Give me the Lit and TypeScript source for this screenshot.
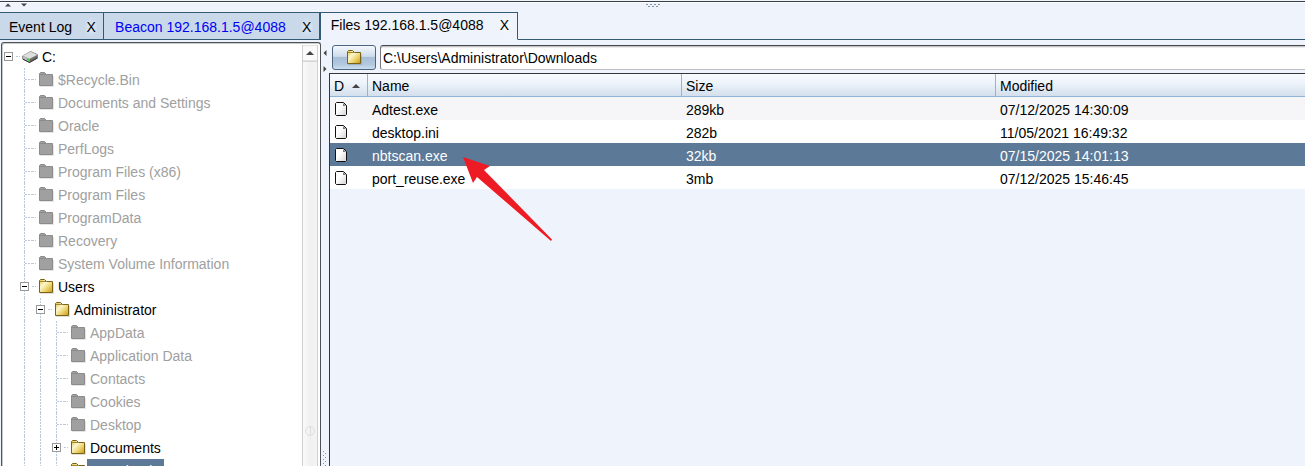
import { LitElement, html, css, svg, nothing } from "lit";
import { customElement, property, state } from "lit/decorators.js";

type Kind = "drive" | "open" | "dim";
interface Node {
  name: string;
  level: number;
  kind: Kind;
  toggle?: "minus" | "plus";
  selected?: boolean;
}
interface FileRow {
  name: string;
  size: string;
  modified: string;
}

const NODES: Node[] = [
  { name: "C:", level: 0, kind: "drive", toggle: "minus" },
  { name: "$Recycle.Bin", level: 1, kind: "dim" },
  { name: "Documents and Settings", level: 1, kind: "dim" },
  { name: "Oracle", level: 1, kind: "dim" },
  { name: "PerfLogs", level: 1, kind: "dim" },
  { name: "Program Files (x86)", level: 1, kind: "dim" },
  { name: "Program Files", level: 1, kind: "dim" },
  { name: "ProgramData", level: 1, kind: "dim" },
  { name: "Recovery", level: 1, kind: "dim" },
  { name: "System Volume Information", level: 1, kind: "dim" },
  { name: "Users", level: 1, kind: "open", toggle: "minus" },
  { name: "Administrator", level: 2, kind: "open", toggle: "minus" },
  { name: "AppData", level: 3, kind: "dim" },
  { name: "Application Data", level: 3, kind: "dim" },
  { name: "Contacts", level: 3, kind: "dim" },
  { name: "Cookies", level: 3, kind: "dim" },
  { name: "Desktop", level: 3, kind: "dim" },
  { name: "Documents", level: 3, kind: "open", toggle: "plus" },
  { name: "Downloads", level: 3, kind: "open", selected: true },
];

const FILES: FileRow[] = [
  { name: "Adtest.exe", size: "289kb", modified: "07/12/2025 14:30:09" },
  { name: "desktop.ini", size: "282b", modified: "11/05/2021 16:49:32" },
  { name: "nbtscan.exe", size: "32kb", modified: "07/15/2025 14:01:13" },
  { name: "port_reuse.exe", size: "3mb", modified: "07/12/2025 15:46:45" },
];

const dimFolder = html`
  <svg class="icon" width="16" height="15" viewBox="0 0 16 15" aria-hidden="true">
    <path d="M2 14.5H15.5V4" fill="none" stroke="#000" stroke-opacity=".1"></path>
    <path d="M1.5 13.5V1.5L2.5 .5H6.5L8.5 2.5H14.5V13.5Z" fill="#a0a0a0" stroke="#8b8b8b"></path>
    <path d="M2 2.5H8" stroke="#8b8b8b" fill="none"></path>
  </svg>
`;

const goldFolder = html`
  <svg class="icon" width="16" height="15" viewBox="0 0 16 15" aria-hidden="true">
    <defs>
      <linearGradient id="gold" x1="0" y1="0" x2="1" y2="1">
        <stop offset="0.1" stop-color="#e9cf6a"></stop>
        <stop offset="0.35" stop-color="#fdf6cf"></stop>
        <stop offset="0.6" stop-color="#efd978"></stop>
        <stop offset="1" stop-color="#c59a14"></stop>
      </linearGradient>
    </defs>
    <path d="M2 14.5H15.5V4" fill="none" stroke="#000" stroke-opacity=".12"></path>
    <path
      d="M1.5 13.5V1.5L2.5 .5H6.5L8.5 2.5H14.5V13.5Z"
      fill="url(#gold)"
      stroke="#7a6216"
    ></path>
    <path d="M2 2.5H8" stroke="#a58a2c" fill="none"></path>
  </svg>
`;

const drive = html`
  <svg class="icon" width="16" height="15" viewBox="0 0 16 15" aria-hidden="true">
    <path d="M.5 7L8.5 2.500L15.500 5.500V9L7.500 13.500L.5 10Z" fill="#999" stroke="#777" stroke-width=".8"></path>
    <path d="M.8 6.800L8.500 2.800L15.200 5.800L7.500 9.800Z" fill="#dedede"></path>
    <path d="M.8 7.200L7.500 10.200V13L.8 9.800Z" fill="#bdbdbd"></path>
    <path d="M7.500 10.200L15.200 6.200V8.800L7.500 13Z" fill="#6a6a6a"></path>
    <path d="M1 10.200L7.500 13.500L15.500 9" fill="none" stroke="#222" stroke-width=".9"></path>
    <path d="M5 10L7.200 11" stroke="#22e022" stroke-width="1.600"></path>
  </svg>
`;

const page = html`
  <svg class="page" width="14" height="16" viewBox="0 0 14 16" aria-hidden="true">
    <defs>
      <linearGradient id="sheet" x1="0" y1="0" x2="1" y2="1">
        <stop offset="0.4" stop-color="#fff"></stop>
        <stop offset="1" stop-color="#d2d2d2"></stop>
      </linearGradient>
    </defs>
    <path d="M2.500 1.500H9.500L12.500 4.500V13.500L11.500 14.500H2.500L1.500 13.500V2.500Z" fill="url(#sheet)" stroke="#111"></path>
    <path d="M9 2L12 5H9Z" fill="#777"></path>
  </svg>
`;

const tri = (dir: "up" | "down" | "left" | "right") => {
  const turn = { up: 0, right: 90, down: 180, left: 270 }[dir];
  return html`<svg class="tri" viewBox="0 0 8 8" aria-hidden="true">
    ${svg`<path d="M0 6L4 2L8 6Z" fill="#444" transform="rotate(${turn} 4 4)"></path>`}
  </svg>`;
};

@customElement("dir-tree")
class DirTree extends LitElement {
  static styles = css`
    :host {
      display: flex;
      flex: 1;
      min-height: 0;
      margin: 2px 0 0 1px;
      border: 1px solid #4f5358;
      border-bottom: 0;
      border-radius: 3px 3px 0 0;
      background: #fff;
      box-shadow: inset 1px 1px 0 #c9cacc;
      overflow: hidden;
    }
    .tree {
      flex: 1;
      min-width: 0;
      margin: 0;
      padding: 2px 0 0;
      list-style: none;
      overflow: hidden;
    }
    .row {
      display: flex;
      align-items: center;
      height: 23px;
      white-space: nowrap;
      color: #000;
    }
    .row.dim {
      color: #a0a0a0;
    }
    .cell {
      flex: none;
      display: flex;
      align-items: center;
      width: 16px;
      height: 23px;
    }
    .cell:first-child {
      width: 14px;
    }
    .line {
      background: repeating-linear-gradient(#b9c9de 0 2px, #fff 2px 3px) 8px 0 / 1px 100% no-repeat;
    }
    .stub {
      flex: none;
      width: 4px;
      height: 1px;
      margin-right: 2px;
    }
    .dash {
      background: repeating-linear-gradient(90deg, #b9c9de 0 2px, #fff 2px 3px);
    }
    .reach {
      width: 7px;
      height: 1px;
      margin-left: 9px;
    }
    .toggle {
      flex: none;
      display: block;
      width: 9px;
      height: 9px;
      margin-left: 4px;
      padding: 0;
      border: 1px solid #999;
      background: linear-gradient(#000, #000) 1px 3px / 5px 1px no-repeat, #fff;
    }
    .cell:first-child .toggle {
      margin-left: 2px;
    }
    .toggle.plus {
      background: linear-gradient(#000, #000) 1px 3px / 5px 1px no-repeat,
        linear-gradient(#000, #000) 3px 1px / 1px 5px no-repeat, #fff;
    }
    .icon {
      flex: none;
      margin-right: 1px;
    }
    .label {
      padding: 2px 5px 0 3px;
      line-height: 21px;
    }
    .label.selected {
      color: #fff;
      background: #5c7997;
    }
    .bar {
      flex: none;
      display: flex;
      flex-direction: column;
      box-sizing: border-box;
      width: 16px;
      margin: 2px 2px 0 0;
      border: 1px solid #cfcfcf;
      border-width: 0 1px;
      background: #f1f1f1;
    }
    .up {
      display: grid;
      place-items: center;
      height: 16px;
      padding: 0;
      border: 1px solid #e2e2e2;
      border-width: 1px 0;
      background: #fafafa;
    }
    .thumb {
      flex: 1;
      display: flex;
      flex-direction: column;
      justify-content: flex-end;
      align-items: center;
      padding-bottom: 30px;
      border-top: 1px solid #d6d6d6;
      background: linear-gradient(90deg, #fafafa, #f0f0f0 50%, #f4f4f4);
    }
    .grip {
      width: 8px;
      height: 8px;
      border: 1px solid #dedede;
      border-radius: 50%;
      background: linear-gradient(#ddd, #ddd) center / 1px 8px no-repeat;
    }
    .tri {
      width: 8px;
      height: 8px;
    }
  `;

  renderCell(n: Node, i: number) {
    const last = i === n.level;
    const toggle = last && n.toggle;
    return html`<span class="cell ${i > 0 ? "line" : ""}">
      ${toggle
        ? html`<button class="toggle ${n.toggle}" aria-label="Toggle ${n.name}"></button>`
        : last
          ? html`<span class="reach dash"></span>`
          : nothing}
    </span>`;
  }

  render() {
    return html`
      <ul class="tree">
        ${NODES.map(
          (n) => html`<li class="row ${n.kind}">
            ${Array.from({ length: n.level + 1 }, (_, i) => this.renderCell(n, i))}
            <span class="stub dash"></span>
            ${n.kind === "drive" ? drive : n.kind === "dim" ? dimFolder : goldFolder}
            <span class="label ${n.selected ? "selected" : ""}">${n.name}</span>
          </li>`
        )}
      </ul>
      <div class="bar">
        <button class="up" aria-label="Scroll up">${tri("up")}</button>
        <div class="thumb"><span class="grip"></span></div>
      </div>
    `;
  }
}

@customElement("file-panel")
class FilePanel extends LitElement {
  @state() selected = 2;

  static styles = css`
    :host {
      display: flex;
      flex-direction: column;
      flex: 1;
      min-width: 0;
      margin-right: -5px;
    }
    .bar {
      display: flex;
      gap: 4px;
      padding: 5px 0 3px 3px;
    }
    .go {
      display: grid;
      place-items: center;
      width: 44px;
      height: 25px;
      padding: 0;
      border: 1px solid #4c6681;
      border-radius: 3px;
      background: linear-gradient(#f4f8fc, #cfdceb 45%, #a9bfd8 50%, #b2c8df 80%, #cbdff0);
    }
    .path {
      flex: 1;
      min-width: 0;
      box-sizing: border-box;
      height: 25px;
      padding: 0 2px;
      border: 1px solid #bcbec4;
      border-top-color: #46484c;
      border-left-color: #77797d;
      border-radius: 3px 0 0 3px;
      box-shadow: inset 0 1px 0 #c4c4c6, inset 0 2px 0 #ececec;
      background: #fff;
      color: #000;
      font: inherit;
      outline: none;
    }
    .list {
      flex: 1;
      border: 1px solid #33373d;
      border-width: 1px 0 0 1px;
    }
    .table {
      width: 100%;
      table-layout: fixed;
      border-collapse: separate;
      border-spacing: 0;
    }
    .kind {
      width: 38px;
    }
    .head,
    .cell {
      box-sizing: border-box;
      height: 23px;
      padding: 2px 4px 0;
      white-space: nowrap;
    }
    .head {
      border: 1px solid #91b5d6;
      border-width: 0 1px 1px 0;
      background: linear-gradient(#f8fbff, #eef4fb 40%, #d3dfec);
      font-weight: normal;
      text-align: left;
    }
    .sort {
      display: flex;
      align-items: center;
      gap: 8px;
    }
    .cell {
      background: #fff;
    }
    .cell:first-child {
      padding-top: 0;
    }
    .odd .cell {
      background: #f6f6f8;
    }
    .on .cell {
      background: #5c7997;
      color: #fff;
    }
    .page {
      display: block;
    }
    .tri {
      width: 8px;
      height: 8px;
    }
  `;

  render() {
    return html`
      <div class="bar">
        <button class="go" aria-label="Up one folder">${goldFolder}</button>
        <input class="path" aria-label="Folder path" value="C:\\Users\\Administrator\\Downloads" />
      </div>
      <div class="list">
        <table class="table">
          <thead>
            <tr>
              <th class="head kind"><span class="sort">D ${tri("up")}</span></th>
              <th class="head">Name</th>
              <th class="head">Size</th>
              <th class="head">Modified</th>
            </tr>
          </thead>
          <tbody>
            ${FILES.map(
              (f, i) => html`<tr
                class=${i === this.selected ? "on" : i === 0 ? "odd" : ""}
                @click=${() => (this.selected = i)}
              >
                <td class="cell">${page}</td>
                <td class="cell">${f.name}</td>
                <td class="cell">${f.size}</td>
                <td class="cell">${f.modified}</td>
              </tr>`
            )}
          </tbody>
        </table>
      </div>
    `;
  }
}

@customElement("tab-item")
class TabItem extends LitElement {
  @property() label = "";
  @property({ type: Boolean, reflect: true }) active = false;
  @property({ type: Boolean, reflect: true }) unread = false;

  static styles = css`
    :host {
      display: flex;
      align-items: center;
      gap: 12px;
      box-sizing: border-box;
      height: 28px;
      padding: 2px 5px 0 9px;
      border: 1px solid #335a74;
      border-left: 0;
      background: #c9d9ea;
    }
    :host([unread]) {
      gap: 14px;
      padding-left: 11px;
      border-right-width: 2px;
    }
    :host([active]) {
      gap: 14px;
      padding: 0 5px 2px 10px;
      border-bottom-color: #eff3fb;
      background: #eff3fb;
    }
    .name,
    .close {
      padding: 0;
      border: 0;
      background: none;
      color: #000;
      font: inherit;
      white-space: nowrap;
    }
    :host([unread]) .name {
      color: #0000f5;
    }
    .close {
      width: 14px;
      text-align: center;
      background: radial-gradient(#ffffff80, #ffffff00 70%);
    }
  `;

  render() {
    return html`
      <button class="name">${this.label}</button>
      <button class="close" aria-label="Close ${this.label}">X</button>
    `;
  }
}

@customElement("app-root")
class AppRoot extends LitElement {
  static styles = css`
    :host {
      position: relative;
      display: flex;
      flex-direction: column;
      height: 100vh;
      overflow: hidden;
      background: #eff3fb;
      color: #000;
      font: 14px/20px "Liberation Sans", Arial, sans-serif;
    }
    .top {
      flex: none;
      display: grid;
      grid-template-columns: 1fr auto 1fr;
      box-sizing: border-box;
      height: 11px;
      margin-top: 1px;
      border-top: 1px solid #3b3f46;
      box-shadow: inset 0 1px 0 #fafcff;
    }
    .arrows {
      display: flex;
      gap: 10px;
      padding: 0 0 0 5px;
    }
    .tri {
      display: block;
      width: 6px;
      height: 6px;
    }
    .tabs {
      flex: none;
      display: flex;
      height: 28px;
    }
    .rest {
      flex: 1;
      border-bottom: 1px solid #335a74;
    }
    .main {
      flex: 1;
      display: flex;
      min-height: 0;
    }
    .side {
      flex: none;
      display: flex;
      flex-direction: column;
      width: 321px;
      min-height: 0;
    }
    .split {
      flex: none;
      display: flex;
      flex-direction: column;
      justify-content: space-between;
      width: 8px;
      padding: 10px 0 0 1px;
      box-sizing: border-box;
    }
    .pair {
      display: flex;
      flex-direction: column;
      gap: 10px;
    }
    .dots {
      display: block;
    }
    .pointer {
      position: absolute;
      left: 462px;
      top: 156px;
      pointer-events: none;
    }
  `;

  render() {
    return html`
      <div class="top">
        <div class="arrows">${tri("up")}${tri("down")}</div>
        <svg class="dots" width="14" height="6" aria-hidden="true">
          <path d="M0 2.500H18" stroke="#8090a6" stroke-dasharray="2 2"></path>
          <path d="M2 4.500H17" stroke="#8090a6" stroke-dasharray="2 2"></path>
        </svg>
      </div>
      <div class="tabs">
        <tab-item label="Event Log"></tab-item>
        <tab-item label="Beacon 192.168.1.5@4088" unread></tab-item>
        <tab-item label="Files 192.168.1.5@4088" active></tab-item>
        <div class="rest"></div>
      </div>
      <div class="main">
        <div class="side"><dir-tree></dir-tree></div>
        <div class="split">
          <div class="pair">${tri("left")}${tri("right")}</div>
          <svg class="dots" width="6" height="16" aria-hidden="true">
            <path d="M1.500 1V16" stroke="#8090a6" stroke-dasharray="1 3"></path>
            <path d="M3.500 3V16" stroke="#8090a6" stroke-dasharray="1 3"></path>
          </svg>
        </div>
        <file-panel></file-panel>
      </div>
      <svg class="pointer" width="90" height="85" viewBox="462 156 90 85" aria-hidden="true">
        <path d="M463 157L490 166L484 170L552 239.500L551 241L477 177L473 183Z" fill="#ed1c24"></path>
      </svg>
    `;
  }
}
